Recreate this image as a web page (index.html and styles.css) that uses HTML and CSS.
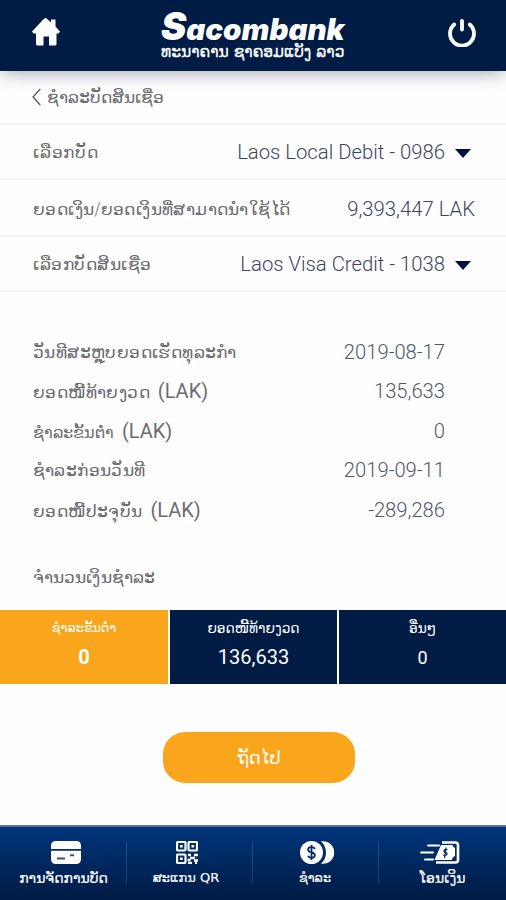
FILE: index.html
```html
<!DOCTYPE html>
<html lang="lo">
<head>
<meta charset="utf-8">
<title>Sacombank</title>
<link rel="stylesheet" href="styles.css">
</head>
<body>
<div class="app">
  <header class="header">
    <svg class="home" viewBox="0 0 28 28"><path d="M14 0 L19 4.500V1.500H23.500V8.500L28 13.500 26.500 15.500H24.500V26Q24.500 27.500 23 27.500H17V18.500H11.500V27.500H5.500Q4 27.500 4 26V15.500H1.500L0 13.500 11.500 1.200Q13 0 14 0Z" fill="#fff"/></svg>
    <div class="brand">
      <div class="logo"><span class="logo-cap">S</span>acombank</div>
      <div class="tagline">ທະນາຄານ ຊາຄອມແບັງ ລາວ</div>
    </div>
    <svg class="power" viewBox="0 0 28 28" fill="none" stroke="#fff" stroke-width="3.800" stroke-linecap="round"><path d="M6.200 5.500A12 12 0 1 0 21.800 5.500M14 2V10.500"/></svg>
  </header>
  <main class="main">
    <div class="title">
      <svg class="back" viewBox="0 0 9 18" fill="none" stroke="#555b6b" stroke-width="1.300"><path d="M8.300 1L1 9l7.300 8"/></svg>
      <span class="lo title-text">ຊຳລະບັດສິນເຊື່ອ</span>
    </div>
    <div class="row"><span class="lo l1">ເລືອກບັດ</span><span class="value">Laos Local Debit - 0986</span><i class="caret"></i></div>
    <div class="row row-balance"><span class="lo l2">ຍອດເງິນ/ຍອດເງິນທີ່ສາມາດນຳໃຊ້ໄດ້</span><span class="value">9,393,447 LAK</span></div>
    <div class="row row-credit"><span class="lo l3">ເລືອກບັດສິນເຊື່ອ</span><span class="value">Laos Visa Credit - 1038</span><i class="caret"></i></div>
    <dl class="details">
      <div class="item"><dt class="lo">ວັນທີສະຫຼຸບຍອດເຮັດທຸລະກຳ</dt><dd>2019-08-17</dd></div>
      <div class="item"><dt class="lo">ຍອດໜີ້ທ້າຍງວດ <b>(LAK)</b></dt><dd>135,633</dd></div>
      <div class="item"><dt class="lo d3">ຊຳລະຂັ້ນຕ່ຳ <b>(LAK)</b></dt><dd>0</dd></div>
      <div class="item"><dt class="lo">ຊຳລະກ່ອນວັນທີ</dt><dd>2019-09-11</dd></div>
      <div class="item"><dt class="lo">ຍອດໜີ້ປະຈຸບັນ <b>(LAK)</b></dt><dd>-289,286</dd></div>
    </dl>
    <h2 class="lo amount-title">ຈຳນວນເງິນຊຳລະ</h2>
    <div class="options">
      <div class="option active"><span class="lo o1">ຊຳລະຂັ້ນຕ່ຳ</span><strong>0</strong></div>
      <div class="option"><span class="lo o2">ຍອດໜີ້ທ້າຍງວດ</span><strong>136,633</strong></div>
      <div class="option"><span class="lo o2">ອື່ນໆ</span><strong class="small">0</strong></div>
    </div>
    <button class="next"><span class="lo">ຖັດໄປ</span></button>
  </main>
  <nav class="nav">
    <a class="tab">
      <svg width="30" height="23" viewBox="0 0 30 23"><path d="M0 8V5Q0 0 5 0H25Q30 0 30 5V8ZM0 9.800H30V18Q30 23 25 23H5Q0 23 0 18Z" fill="#fff"/><path d="M6 17.500h8M19 14.200h4" stroke="#315489" stroke-width="2"/></svg>
      <span>ການຈັດການບັດ</span>
    </a>
    <a class="tab tab-qr">
      <svg width="22" height="23" viewBox="0 0 22 23" fill="none" stroke="#fff" stroke-width="2.200"><rect x="1" y="1" width="8.500" height="8.500" rx="1"/><rect x="12.500" y="1" width="8.500" height="8.500" rx="1"/><rect x="1" y="13.500" width="8.500" height="8.500" rx="1"/><path d="M4 5.200h2.600M15.500 5.200h2.600M4 17.700h2.600" stroke-width="2.600"/><path d="M12 14h3M18 14h4M14 17h5M11.500 19h3M18 19.500h4M12 22h4M19 22h2" stroke-width="2.400"/></svg>
      <span>ສະແກນ QR</span>
    </a>
    <a class="tab tab-pay">
      <svg width="34" height="23" viewBox="0 0 34 23"><path d="M21 .2H23A11.300 11.300 0 0 1 23 22.800H21Q26 18 26 11.500T21 .2Z" fill="#fff"/><circle cx="11.500" cy="11.500" r="11.500" fill="#fff"/><path d="M15 8Q14 6.200 11.500 6.200C7 6.200 7 10.800 11.500 11.300C16 12 16 16.800 11.500 16.800Q9 16.800 8 15M11.500 4v15" fill="none" stroke="#042c6d" stroke-width="1.800"/></svg>
      <span>ຊຳລະ</span>
    </a>
    <a class="tab tab-transfer">
      <svg width="40" height="23" viewBox="0 0 40 23" fill="none" stroke="#fff" stroke-width="2"><path d="M8 4.500h11M1 11.500h12M5 18.500h8" stroke-linecap="round"/><path d="M22 1.500H35.500Q38 1.500 38 4V19Q38 21.500 35.500 21.500H16" stroke-width="2.600"/><path d="M21 4H32.500Q33 6.500 35 7V15Q33 15.500 31.500 19H14.500Z" fill="#fff" stroke="none"/><path d="M27.500 8.700C24 7.500 22.500 11 25.500 11.500C28.500 12 27 15.500 23 14M26 6.500L24.500 17" stroke="#042c6d" stroke-width="1.300"/></svg>
      <span>ໂອນເງິນ</span>
    </a>
  </nav>
</div>
</body>
</html>
```
FILE: styles.css
```css
* { box-sizing: border-box; }
body { margin: 0; background: #fefefe; font-family: Roboto, "DejaVu Sans", sans-serif; }
.app { width: 506px; height: 900px; display: flex; flex-direction: column; overflow: hidden; }
.header { height: 71px; flex: none; background: #001b44; display: flex; justify-content: space-between; padding: 18px 30px 0 32px; box-shadow: 0 3px 18px -2px rgba(10,15,45,.4); }
.home { width: 28px; height: 28px; }
.power { width: 28px; height: 28px; margin-top: 1px; }
.brand { color: #fff; width: 186px; margin-top: -7px; }
.logo { font: italic 900 29.500px/30px Inter, "Liberation Sans", sans-serif; height: 33px; white-space: nowrap; }
.logo-cap { font-size: 38px; line-height: 30px; }
.tagline { font: 15.500px/16px "DejaVu Sans", sans-serif; -webkit-text-stroke: .3px #fff; white-space: nowrap; }
.main { flex: 1; display: flex; flex-direction: column; }
.lo { font-family: "DejaVu Sans", sans-serif; font-weight: 200; font-size: 17px; letter-spacing: .4px; color: #6c6c70; white-space: nowrap; }
.title { height: 54px; flex: none; display: flex; align-items: center; gap: 6px; padding-left: 32px; border-bottom: 2px solid #f5f5f6; }
.title-text { font-size: 16.900px; letter-spacing: 0; }
.back { width: 9px; height: 18px; }
.row { height: 55px; flex: none; display: flex; align-items: center; padding: 0 31px 0 33px; border-bottom: 2px solid #f3f3f4; }
.row-balance { height: 57px; padding-top: 2px; }
.row-credit { height: 55px; }
.l1 { letter-spacing: .8px; }
.l3 { letter-spacing: .5px; }
.value { margin-left: auto; font-weight: 300; font-size: 20.300px; color: #3b4562; white-space: nowrap; }
.caret { margin: 4px 4px 0 10px; border: 8px solid transparent; border-top: 9px solid #001040; border-bottom: 0; }
.details { margin: 40px 61px 0 33px; }
.item { height: 39.500px; display: flex; justify-content: space-between; align-items: center; }
.item dd { margin: 0; font-weight: 300; font-size: 20.200px; color: #50586a; }
.item b { font: 20px Roboto, sans-serif; letter-spacing: 0; margin-left: 2px; }
.d3 { font-size: 16.400px; letter-spacing: .1px; }
.amount-title { margin: 28px 0 0 33px; font-size: 16.800px; letter-spacing: .1px; line-height: 38px; }
.options { height: 74px; flex: none; display: grid; grid-template-columns: 168px 167px 1fr; gap: 2px; margin-top: 14px; }
.option { background: #001b44; display: flex; flex-direction: column; align-items: center; padding-top: 7px; }
.option .lo { color: #fff; line-height: 22px; font-weight: 400; letter-spacing: 0; }
.option .o1 { font-size: 12.800px; }
.option .o2 { font-size: 13.800px; }
.option strong { color: #fff; font-size: 20px; line-height: 37px; font-weight: 400; }
.option strong.small { font-size: 18px; }
.option.active { background: #faa61d; }
.option.active strong { font-weight: 700; }
.next { width: 192px; height: 51px; margin: 48px 0 0 163px; padding: 0; border: 0; border-radius: 22px; background: #faa61d; }
.next .lo { color: #fff; font-weight: 400; font-size: 17.800px; letter-spacing: 0; }
.nav { height: 75px; flex: none; display: grid; grid-template-columns: 127px 126px 126px 1fr; background: linear-gradient(#01357a, #001b44); border-top: 2px solid #5d76a0; }
.tab { display: flex; flex-direction: column; align-items: center; padding: 14px 0 0 4px; color: #fff; font: 14px/20px "DejaVu Sans", sans-serif; white-space: nowrap; background: linear-gradient(#244f86, #193c6d) right 15px / 1px 42px no-repeat; }
.tab:last-child { background: none; }
.tab svg { flex: none; }
.tab span { margin: 4px 4px 0 0; -webkit-text-stroke: .2px #fff; }
.tab-qr { font-size: 13px; padding-left: 0; }
.tab-qr svg { margin-left: -6px; }
.tab-qr span { margin-right: 0; margin-left: -8px; }
.tab-pay { font-size: 12.800px; padding-left: 2px; }
.tab-transfer { padding-left: 0; }
.tab-transfer span { margin-right: 0; }
.tab-transfer svg { margin-right: 6px; }
```
